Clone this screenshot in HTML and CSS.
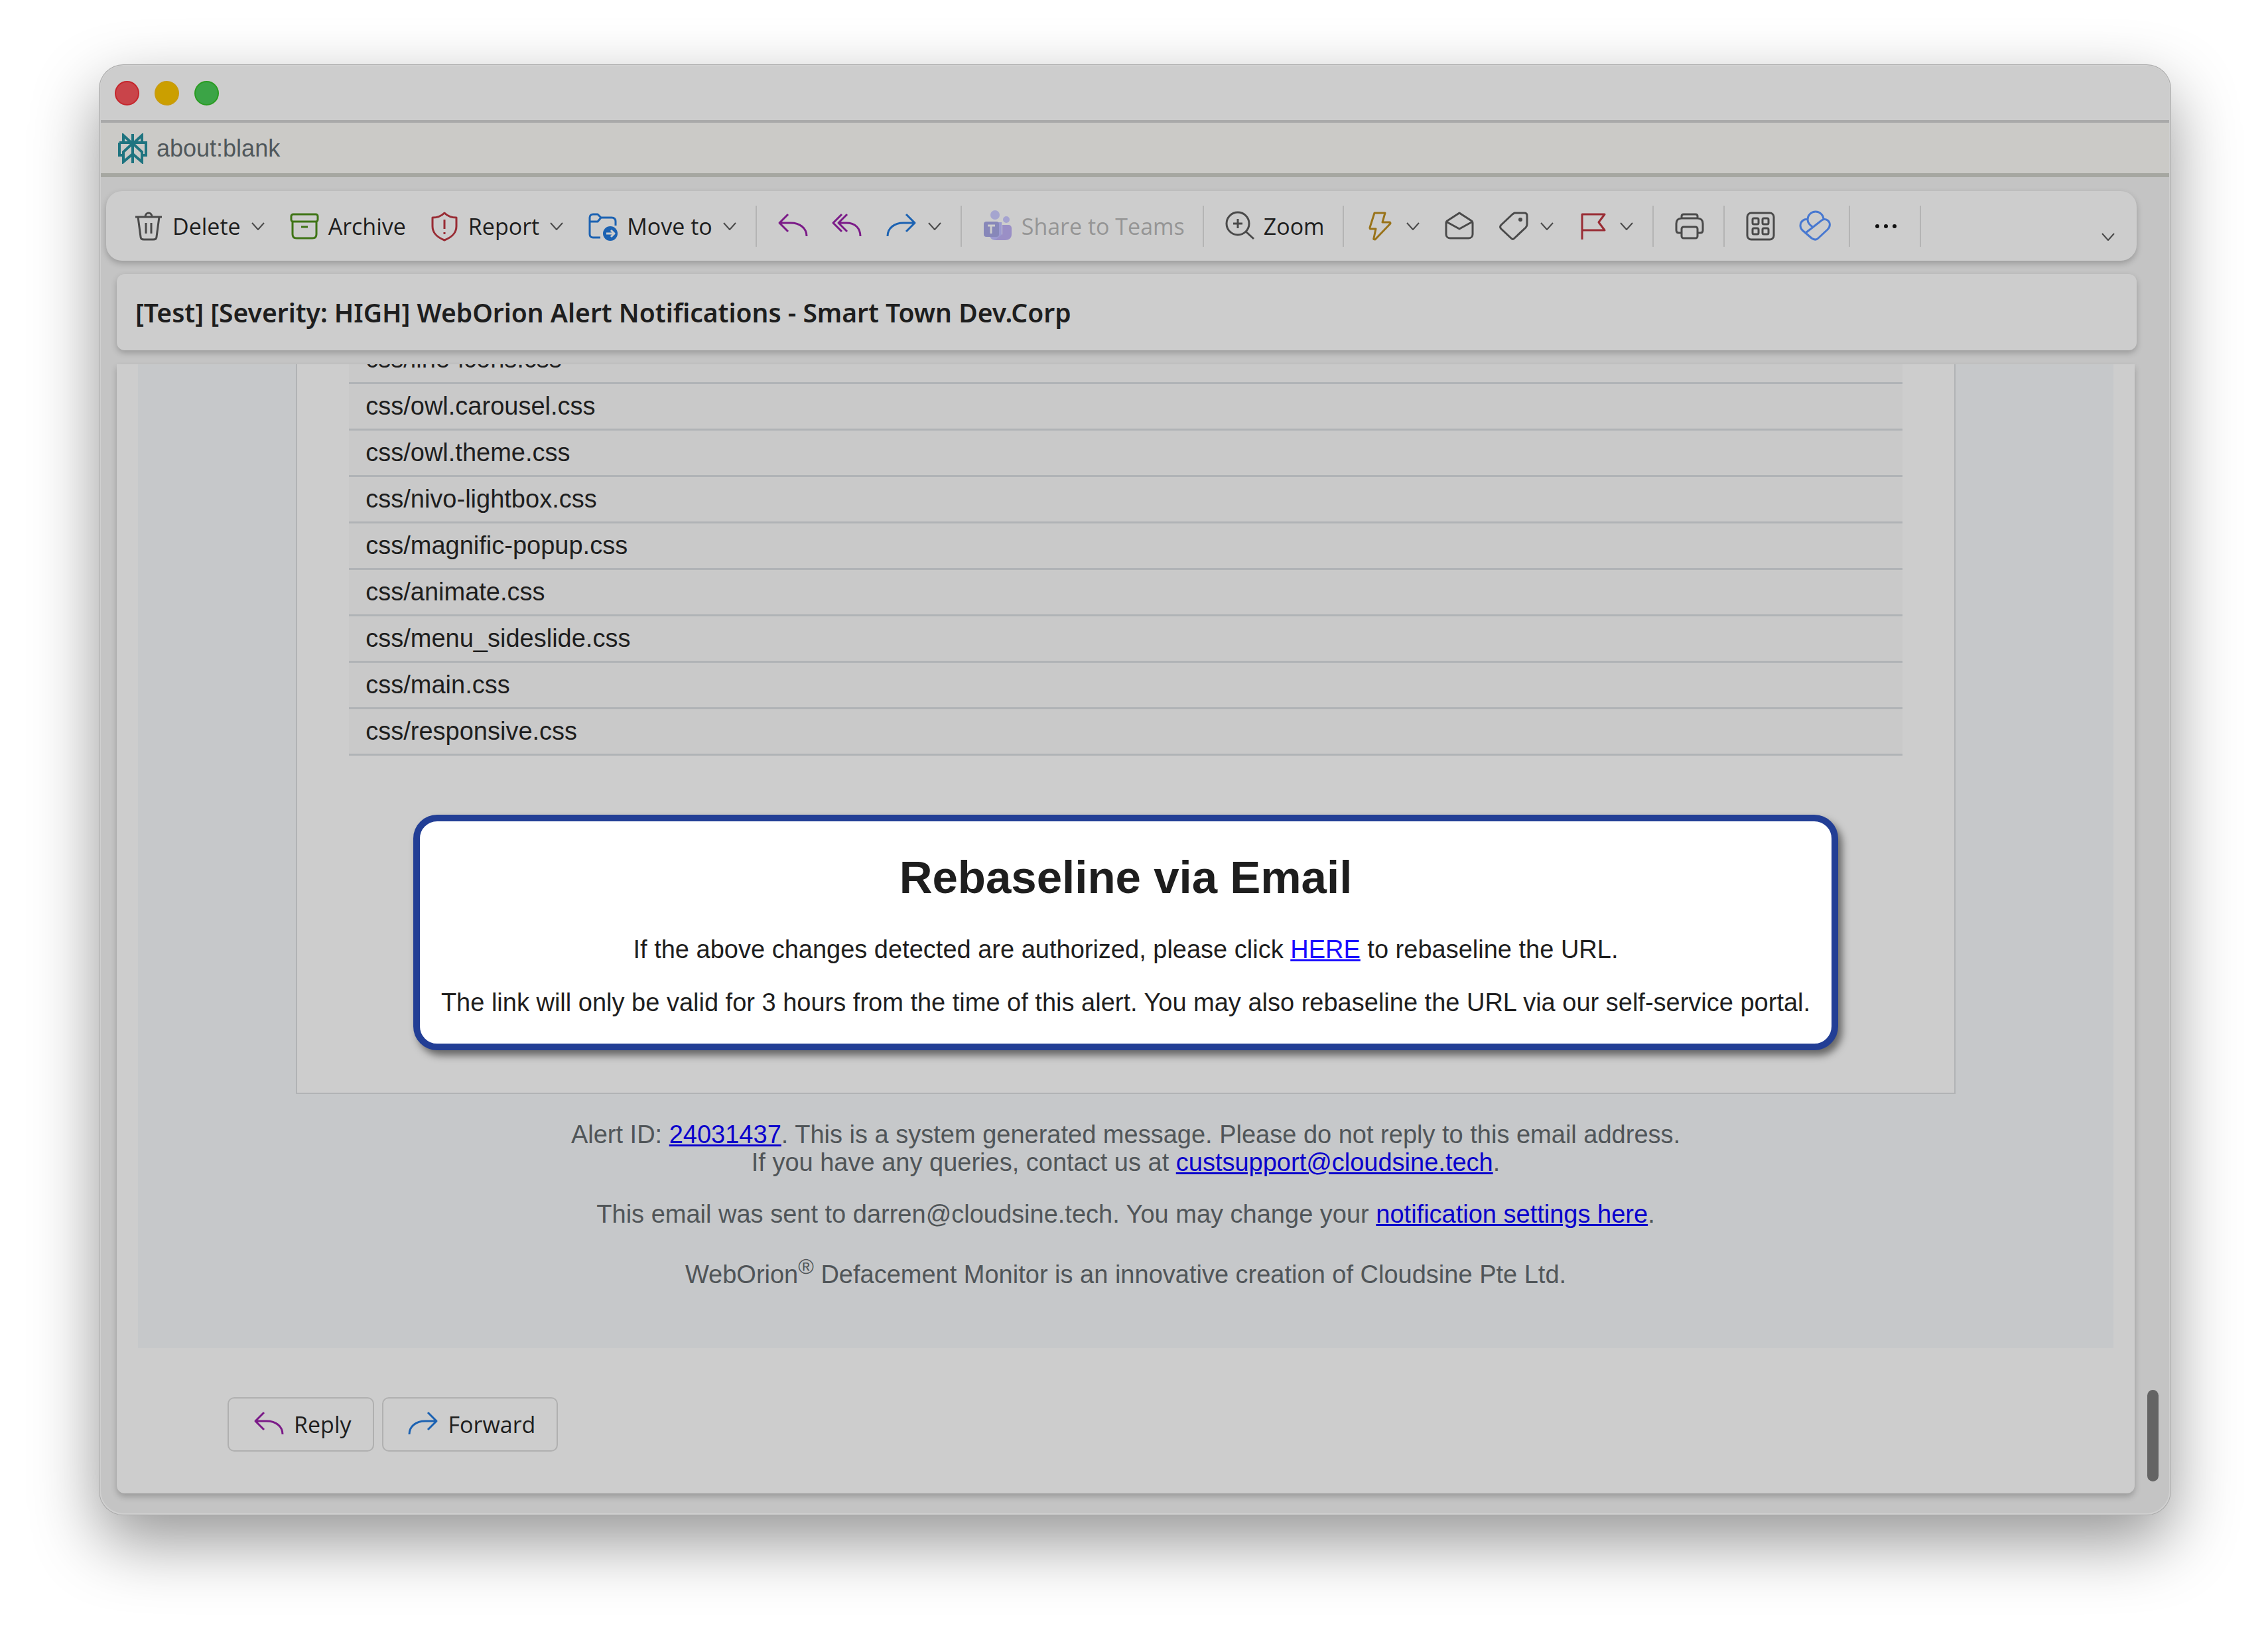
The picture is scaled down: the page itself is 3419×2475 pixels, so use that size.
FILE: index.html
```html
<!DOCTYPE html>
<html lang="en">
<head>
  <meta charset="UTF-8" />
  <meta name="viewport" content="width=device-width, initial-scale=1.0" />
  <title>about:blank</title>
  <link rel="stylesheet" href="styles.css">
</head>
<body>

<!-- shared icons -->
<svg class="sprite" aria-hidden="true">
  <symbol id="chevron" viewBox="0 0 24 24"><path d="M3 7l9 10 9-10"/></symbol>
  <symbol id="reply" viewBox="0 0 48 48"><path d="M17 6L4 19l13 13M4 19h17c14 0 24 8 24 20"/></symbol>
  <symbol id="forward" viewBox="0 0 48 48"><path d="M31 6l13 13-13 13M44 19H27C13 19 3 27 3 39"/></symbol>
</svg>

<div class="window">
  <div class="title-bar">
    <span class="dot red"></span>
    <span class="dot yellow"></span>
    <span class="dot green"></span>
  </div>

  <div class="address-bar">
    <svg class="site-icon" viewBox="0 0 44 46"><path d="M22 1v44M22 16L8 3v13M22 16L36 3v13M2 14h40v19h-6M2 14v19h6M22 15L8 28v15l14-12M22 15l14 13v15L22 31"/></svg>
    <span>about:blank</span>
  </div>

  <div class="main">
    <div class="content">

      <div class="toolbar">
        <button class="tool">
          <svg class="icon" viewBox="0 0 48 48"><path d="M4 10h40M19 10c0-8 10-8 10 0M8 10l4 30c0 3 2 4 5 4h14c3 0 5-1 5-4l4-30M20 19v16M28 19v16"/></svg>
          Delete
          <svg class="chevron"><use href="#chevron"/></svg>
        </button>
        <button class="tool">
          <svg class="icon green-icon" viewBox="0 0 48 48"><rect x="4" y="6" width="40" height="11" rx="3"/><path d="M6 17v19c0 4 2 6 6 6h24c4 0 6-2 6-6V17M19 25h10"/></svg>
          Archive
        </button>
        <button class="tool">
          <svg class="icon red-icon" viewBox="0 0 48 48"><path d="M24 4c5 5 11 7 18 7v13c0 10-6 16-18 21C12 40 6 34 6 24V11c7 0 13-2 18-7zM24 14v14M24 33v3"/></svg>
          Report
          <svg class="chevron"><use href="#chevron"/></svg>
        </button>
        <button class="tool">
          <svg class="icon blue-icon" viewBox="0 0 48 48"><path d="M20 41H9c-3 0-5-2-5-5V11c0-3 2-5 5-5h7l5 5h16c4 0 6 2 6 6v6M4 17h12l5-6"/><circle class="solid" cx="35" cy="35" r="11"/><path class="cut" d="M29 35h12M36 30l5 5-5 5"/></svg>
          Move to
          <svg class="chevron"><use href="#chevron"/></svg>
        </button>
        <span class="separator"></span>
        <button class="tool" aria-label="Reply"><svg class="icon purple-icon"><use href="#reply"/></svg></button>
        <button class="tool" aria-label="Reply all">
          <svg class="icon purple-icon" viewBox="0 0 48 48"><path d="M16 6L3 19l13 13M24 6L11 19l13 13M11 19h12c13 0 21 8 21 20"/></svg>
        </button>
        <button class="tool" aria-label="Forward">
          <svg class="icon blue-icon"><use href="#forward"/></svg>
          <svg class="chevron"><use href="#chevron"/></svg>
        </button>
        <span class="separator"></span>
        <button class="tool" disabled>
          <svg class="icon teams-icon" viewBox="0 0 48 48"><circle cx="20" cy="7" r="7" fill="#a5a5cf"/><circle cx="37" cy="14" r="5" fill="#a5a3d0"/><path d="M13 18h17v27H20c-5 0-8-4-8-8z" fill="#9c9ad0"/><path d="M31 22h9c3 0 5 2 5 5v9c0 6-4 9-10 9H20l11-9z" fill="#9a8fc6"/><rect x="3" y="17" width="23" height="23" rx="4" fill="#8787b9"/><path class="cut" d="M9 23h11M14 23v12"/></svg>
          Share to Teams
        </button>
        <span class="separator"></span>
        <button class="tool">
          <svg class="icon" viewBox="0 0 48 48"><circle cx="21" cy="20" r="17"/><path d="M33 32l12 11M21 13v14M14 20h14"/></svg>
          Zoom
        </button>
        <span class="separator"></span>
        <button class="tool" aria-label="Quick steps">
          <svg class="icon gold-icon" viewBox="0 0 48 48"><path d="M16 4h16l-4 14h11c1 0 1 1 1 2L17 44c-1 0-3 0-2-2l3-14h-8c-1 0-1-1-1-2z"/></svg>
          <svg class="chevron"><use href="#chevron"/></svg>
        </button>
        <button class="tool" aria-label="Mark as read">
          <svg class="icon" viewBox="0 0 48 48"><path d="M4 19c0-2 1-3 3-4L24 4l17 11c2 1 3 2 3 4v17c0 3-2 6-6 6H10c-4 0-6-3-6-6zM4 17l20 11 20-11"/></svg>
        </button>
        <button class="tool" aria-label="Categorize">
          <svg class="icon" viewBox="0 0 48 48"><path d="M25 4h15c3 0 4 2 4 4v13c0 2-1 4-2 5L25 42c-2 2-3 2-5 0L5 28c-2-2-2-4 0-6L22 6z"/><circle class="point" cx="34" cy="14" r="3"/></svg>
          <svg class="chevron"><use href="#chevron"/></svg>
        </button>
        <button class="tool" aria-label="Flag">
          <svg class="icon red-icon" viewBox="0 0 48 48"><path d="M7 44V6h34l-9 12 9 12H7"/></svg>
          <svg class="chevron"><use href="#chevron"/></svg>
        </button>
        <span class="separator"></span>
        <button class="tool" aria-label="Print">
          <svg class="icon" viewBox="0 0 48 48"><path d="M12 12V9c0-2 1-3 3-3h18c2 0 3 1 3 3v3M12 34H8c-3 0-4-2-4-4V20c0-5 3-8 8-8h24c5 0 8 3 8 8v10c0 2-1 4-4 4h-4"/><rect x="12" y="25" width="24" height="17" rx="3"/></svg>
        </button>
        <span class="separator"></span>
        <button class="tool" aria-label="Apps">
          <svg class="icon" viewBox="0 0 48 48"><rect x="4" y="4" width="40" height="40" rx="6"/><rect x="12" y="12" width="9" height="9" rx="2"/><rect x="27" y="12" width="9" height="9" rx="2"/><rect x="12" y="27" width="9" height="9" rx="2"/><rect x="27" y="27" width="9" height="9" rx="2"/></svg>
        </button>
        <button class="tool" aria-label="Viva">
          <svg class="icon viva-icon" viewBox="0 0 48 48"><path d="M13 14a12 12 0 1 1 24 0M13 14c-5-2-11 3-11 9 0 3 1 5 3 7l14 12c4 3 7 3 10 0l14-13c5-5 4-11 0-14-3-2-7-2-10 1L10 34M13 14c0 5 4 9 9 12"/></svg>
        </button>
        <span class="separator"></span>
        <button class="tool" aria-label="More">
          <svg class="icon more-icon" viewBox="0 0 48 48"><circle cx="11" cy="24" r="3"/><circle cx="24" cy="24" r="3"/><circle cx="37" cy="24" r="3"/></svg>
        </button>
        <span class="separator"></span>
        <button class="tool collapse" aria-label="Collapse ribbon"><svg class="chevron"><use href="#chevron"/></svg></button>
      </div>

      <h2 class="subject">[Test] [Severity: HIGH] WebOrion Alert Notifications - Smart Town Dev.Corp</h2>

      <div class="message">
        <div class="mail">
          <div class="mail-card">
            <table class="files">
              <tr><td>css/line-icons.css</td></tr>
              <tr><td>css/owl.carousel.css</td></tr>
              <tr><td>css/owl.theme.css</td></tr>
              <tr><td>css/nivo-lightbox.css</td></tr>
              <tr><td>css/magnific-popup.css</td></tr>
              <tr><td>css/animate.css</td></tr>
              <tr><td>css/menu_sideslide.css</td></tr>
              <tr><td>css/main.css</td></tr>
              <tr><td>css/responsive.css</td></tr>
            </table>

            <div class="rebaseline">
              <h1>Rebaseline via Email</h1>
              <p>If the above changes detected are authorized, please click <a href="#">HERE</a> to rebaseline the URL.</p>
              <p>The link will only be valid for 3 hours from the time of this alert. You may also rebaseline the URL via our self-service portal.</p>
            </div>
          </div>

          <div class="mail-footer">
            <p>Alert ID: <a href="#">24031437</a>. This is a system generated message. Please do not reply to this email address.<br>
            If you have any queries, contact us at <a href="#">custsupport@cloudsine.tech</a>.</p>
            <p>This email was sent to darren@cloudsine.tech. You may change your <a href="#">notification settings here</a>.</p>
            <p>WebOrion<sup>®</sup> Defacement Monitor is an innovative creation of Cloudsine Pte Ltd.</p>
          </div>
        </div>

        <div class="actions">
          <button class="action"><svg class="icon purple-icon"><use href="#reply"/></svg>Reply</button>
          <button class="action"><svg class="icon blue-icon"><use href="#forward"/></svg>Forward</button>
        </div>
      </div>

    </div>
    <div class="scroll-track"><div class="scroll-thumb"></div></div>
  </div>
</div>

</body>
</html>
```

FILE: styles.css
```css
* { box-sizing: border-box; }
body {
  margin: 0;
  padding: 98px 147px 192px 150px;
  background: #fff;
  font-family: "Open Sans", "Noto Sans", sans-serif;
  color: #1e1e1e;
}
.sprite { display: none; }

/* window */
.window {
  border: 2px solid #d0d0d0;
  border-radius: 36px;
  background: #c4c4c4;
  overflow: hidden;
  box-shadow: 0 0 0 1px #a8a8a8, 0 40px 100px rgba(0,0,0,0.42);
}
.title-bar {
  display: flex;
  align-items: center;
  gap: 23px;
  height: 85px;
  padding: 0 21px;
  background: #cdcdcd;
  border-bottom: 4px solid #a9a9a9;
}
.dot {
  width: 37px;
  height: 37px;
  border-radius: 50%;
  border: 2px solid;
}
.red { background: #c9444a; border-color: #c5262c; }
.yellow { background: #cb9f00; border-color: #c99b0c; }
.green { background: #3ba446; border-color: #2a9c22; }
.address-bar {
  display: flex;
  align-items: center;
  gap: 14px;
  height: 82px;
  padding: 2px 26px 0;
  background: #cbcac7;
  border-bottom: 6px solid #a6a7a1;
  font-family: "Liberation Sans", Arial, sans-serif;
  font-size: 36px;
  color: #50585c;
}
.site-icon {
  width: 44px;
  height: 46px;
  fill: none;
  stroke: #1f7480;
  stroke-width: 4;
}
.main { display: flex; }
.content {
  flex: 1;
  min-width: 0;
  padding: 21px 0 30px 24px;
}

/* toolbar */
.toolbar {
  display: flex;
  align-items: center;
  height: 105px;
  margin-left: -16px;
  padding: 0 23px;
  background: #cdcdcd;
  border-radius: 24px;
  box-shadow: 0 4px 10px rgba(0,0,0,0.22);
}
.tool {
  display: flex;
  align-items: center;
  gap: 12px;
  padding: 0 17px;
  border: none;
  background: none;
  font: inherit;
  font-size: 34px;
  line-height: 48px;
  color: #1e1e1e;
  white-space: nowrap;
}
.tool:disabled { color: #959595; }
.icon, .chevron {
  flex: none;
  fill: none;
  stroke: #4a4a4a;
  stroke-width: 3;
  stroke-linejoin: round;
}
.icon { width: 48px; height: 48px; }
.chevron {
  width: 24px;
  height: 24px;
  margin-left: 2px;
  stroke-width: 2;
}
.green-icon { stroke: #3f7416; }
.red-icon { stroke: #992c34; }
.blue-icon { stroke: #1c62b2; }
.purple-icon { stroke: #7b1b88; }
.gold-icon { stroke: #99731a; }
.viva-icon { stroke: #4878d0; }
.teams-icon, .more-icon { stroke: none; }
.more-icon { fill: #111; }
.solid { fill: #1c62b2; stroke: none; }
.point { fill: #4a4a4a; stroke: none; }
.cut { stroke: #cdcdcd; }
.separator {
  width: 2px;
  height: 62px;
  margin: 0 13px 0 10px;
  background: #b4b4b4;
}
.collapse {
  margin-left: auto;
  padding: 32px 8px 0;
}

/* message */
.subject {
  margin: 20px 0 21px;
  padding: 0 28px;
  background: #cdcdcd;
  border-radius: 12px;
  box-shadow: 0 4px 10px rgba(0,0,0,0.22);
  font-family: "Noto Sans", "Open Sans", sans-serif;
  font-size: 39px;
  font-weight: 600;
  line-height: 115px;
}
.message {
  margin-right: 3px;
  padding: 0 32px 63px;
  background: #cdcdcd;
  border-radius: 0 0 12px 12px;
  box-shadow: 0 5px 10px rgba(0,0,0,0.22);
}
.mail {
  padding-bottom: 91px;
  background: #c6c8ca;
  font-family: "Liberation Sans", Arial, sans-serif;
  font-size: 38px;
  line-height: 42px;
  overflow: hidden;
}
.mail-card {
  width: 84%;
  margin: 0 auto;
  padding: 0 78px 64px;
  background: #cdcdcd;
  border: 2px solid #b1b3b5;
  border-top: none;
}
/* the list is scrolled, its first row is cut by the panel */
.files {
  width: 100%;
  margin-top: -42px;
  border-collapse: collapse;
  background: #c9c9c9;
}
.files td {
  height: 70px;
  padding: 0 25px;
  border-bottom: 3px solid #b0b3b6;
}
.rebaseline {
  width: fit-content;
  margin: 89px auto 0;
  padding: 45px 32px 41px;
  background: #fff;
  border: 10px solid #223e95;
  border-radius: 36px;
  box-shadow: 6px 8px 12px rgba(0,0,0,0.5);
  text-align: center;
}
.rebaseline h1 {
  margin: 0 0 47px;
  font-size: 69px;
  line-height: 80px;
}
.rebaseline p { margin: 38px 0 0; }
.rebaseline a { color: #1a0dff; }
.mail-footer {
  padding-top: 40px;
  text-align: center;
  color: #505558;
}
.mail-footer p { margin: 0 0 36px; }
.mail-footer p:last-child { margin: 0; }
.mail-footer a { color: #0a00cc; }
.mail-footer sup { font-size: 32px; line-height: 44px; }

/* reply buttons */
.actions {
  display: flex;
  gap: 12px;
  padding: 74px 0 0 135px;
}
.action {
  display: flex;
  align-items: center;
  gap: 14px;
  height: 82px;
  padding: 0 32px 0 36px;
  border: 2px solid #b0b0b0;
  border-radius: 10px;
  background: #cdcdcd;
  font: inherit;
  font-size: 34px;
  color: #1e1e1e;
}

/* scrollbar */
.scroll-track {
  display: flex;
  align-items: flex-end;
  width: 49px;
  padding: 0 16px 48px;
}
.scroll-thumb {
  width: 17px;
  height: 138px;
  border-radius: 9px;
  background: #646464;
}
```
